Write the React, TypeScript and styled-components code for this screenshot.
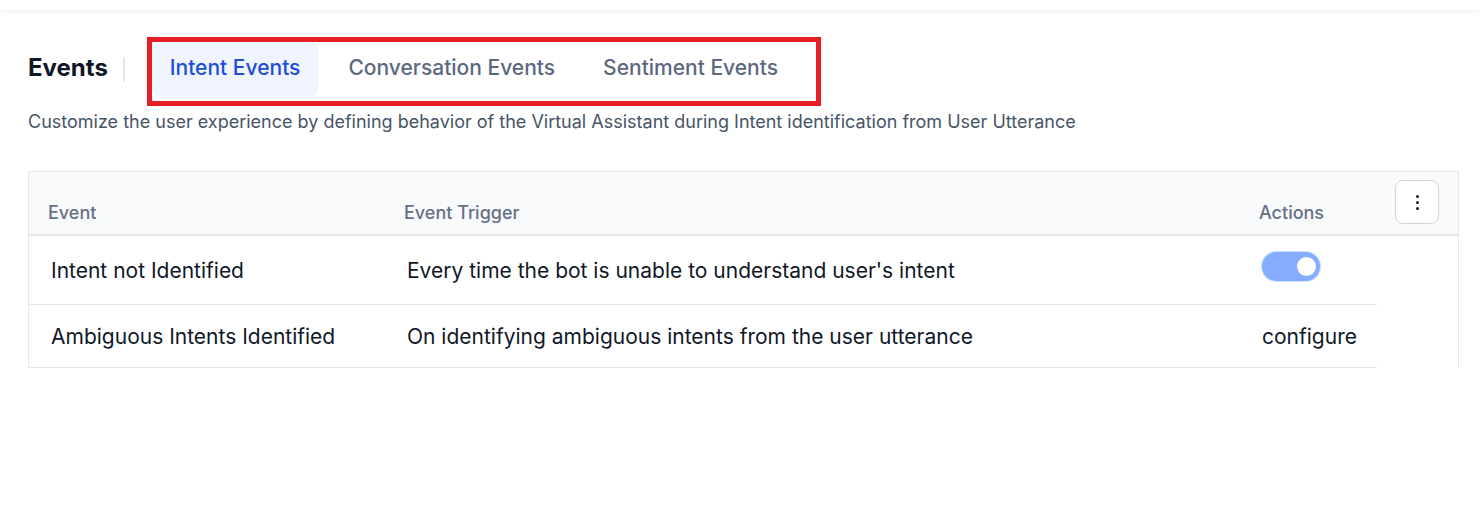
import { useState } from "react";
import { styled, createGlobalStyle } from "styled-components";

const GlobalStyle = createGlobalStyle`
  * {
    box-sizing: border-box;
  }
  body {
    margin: 0;
    background: #fff;
    font-family: Inter, "Noto Sans", sans-serif;
  }
`;

interface EventRow {
  name: string;
  trigger: string;
  action: "toggle" | "configure";
}

const rows: EventRow[] = [
  {
    name: "Intent not Identified",
    trigger: "Every time the bot is unable to understand user's intent",
    action: "toggle",
  },
  {
    name: "Ambiguous Intents Identified",
    trigger: "On identifying ambiguous intents from the user utterance",
    action: "configure",
  },
];

const tabs = ["Intent Events", "Conversation Events", "Sentiment Events"];

const App = () => {
  const [active, setActive] = useState(0);
  const [enabled, setEnabled] = useState(true);

  return (
    <>
      <GlobalStyle />
      <TopBar />
      <Page>
        <TitleRow>
          <TitleWrap>
            <Title>Events</Title>
            <Divider />
          </TitleWrap>
          <Tabs>
            {tabs.map((tab, index) => (
              <Tab
                key={tab}
                $active={index === active}
                onClick={() => setActive(index)}
              >
                {tab}
              </Tab>
            ))}
          </Tabs>
        </TitleRow>
        <Description>
          Customize the user experience by defining behavior of the Virtual
          Assistant during Intent identification from User Utterance
        </Description>

        <Table>
          <HeaderRow>
            <HeadCell>Event</HeadCell>
            <HeadCell>Event Trigger</HeadCell>
            <HeadCell>Actions</HeadCell>
            <MenuCell>
              <MenuButton aria-label="More options">
                <Dot />
                <Dot />
                <Dot />
              </MenuButton>
            </MenuCell>
          </HeaderRow>
          {rows.map((row) => (
            <BodyRow key={row.name} $tall={row.action === "toggle"}>
              <Cell>{row.name}</Cell>
              <Cell>{row.trigger}</Cell>
              <ActionCell>
                {row.action === "toggle" ? (
                  <Toggle $on={enabled} onClick={() => setEnabled(!enabled)}>
                    <Knob $on={enabled} />
                  </Toggle>
                ) : (
                  <span>configure</span>
                )}
              </ActionCell>
            </BodyRow>
          ))}
        </Table>
      </Page>
    </>
  );
};

export default App;

const TopBar = styled.div`
  height: 10px;
  background: #fff;
  box-shadow: 0 2px 4px rgba(16, 24, 40, 0.06);
`;

const Page = styled.div`
  padding: 27px 21px 0 28px;
`;

const TitleRow = styled.div`
  display: flex;
  align-items: flex-start;
`;

const TitleWrap = styled.div`
  display: flex;
  align-items: center;
  height: 54px;
  margin-top: 5px;
  margin-right: 22px;
`;

const Title = styled.h1`
  margin: 0 0 4px 0;
  font-size: 24px;
  font-weight: 700;
  color: #101828;
`;

const Divider = styled.div`
  width: 2px;
  height: 25px;
  margin-left: 15px;
  background: #e4e7ec;
`;

const Tabs = styled.div`
  display: flex;
  gap: 12px;
  border: 5px solid #e31e25;
  padding: 0 20px 5px 0;
`;

const Tab = styled.button<{ $active: boolean }>`
  height: 54px;
  padding: 0 18px 4px 18px;
  border: none;
  border-radius: 7px;
  background: ${(p) => (p.$active ? "#eff4ff" : "transparent")};
  color: ${(p) => (p.$active ? "#1d4ed8" : "#5c6880")};
  font-family: Inter, sans-serif;
  font-size: 21px;
  font-weight: 500;
  cursor: pointer;
`;

const Description = styled.p`
  margin: 5px 0 0 0;
  font-size: 18px;
  color: #475467;
`;

const Table = styled.div`
  margin-top: 39px;
  border: 1px solid #e4e7ec;
  border-bottom: none;
`;

const HeaderRow = styled.div`
  display: grid;
  grid-template-columns: 356px 855px 137px 1fr;
  height: 64px;
  background: #f9fafb;
  border-bottom: 2px solid #e4e7ec;
`;

const HeadCell = styled.div`
  padding: 30px 0 0 19px;
  font-size: 18px;
  font-weight: 500;
  color: #667085;
`;

const MenuCell = styled.div`
  display: flex;
  justify-content: flex-end;
  align-items: flex-start;
  padding: 8px 19px 0 0;
`;

const MenuButton = styled.button`
  width: 44px;
  height: 44px;
  display: flex;
  flex-direction: column;
  align-items: center;
  justify-content: center;
  gap: 3px;
  background: #fff;
  border: 1px solid #d0d5dd;
  border-radius: 8px;
  cursor: pointer;
`;

const Dot = styled.span`
  width: 3px;
  height: 3px;
  border-radius: 50%;
  background: #101828;
`;

const BodyRow = styled.div<{ $tall: boolean }>`
  display: grid;
  grid-template-columns: 356px 855px 137px;
  align-items: center;
  width: 1348px;
  height: ${(p) => (p.$tall ? "69px" : "63px")};
  border-bottom: 1px solid #e4e7ec;
`;

const Cell = styled.div`
  padding-left: 22px;
  font-size: 21px;
  color: #101828;
`;

const ActionCell = styled(Cell)`
  display: flex;
  align-items: center;
`;

const Toggle = styled.button<{ $on: boolean }>`
  position: relative;
  width: 58px;
  height: 29px;
  margin-top: -8px;
  padding: 0;
  border: none;
  border-radius: 15px;
  background: ${(p) => (p.$on ? "#84adff" : "#e4e7ec")};
  box-shadow: 0 0 0 1px rgba(132, 173, 255, 0.4);
  cursor: pointer;
`;

const Knob = styled.span<{ $on: boolean }>`
  position: absolute;
  top: 5px;
  left: ${(p) => (p.$on ? "35px" : "5px")};
  width: 19px;
  height: 19px;
  border-radius: 50%;
  background: #fff;
`;
